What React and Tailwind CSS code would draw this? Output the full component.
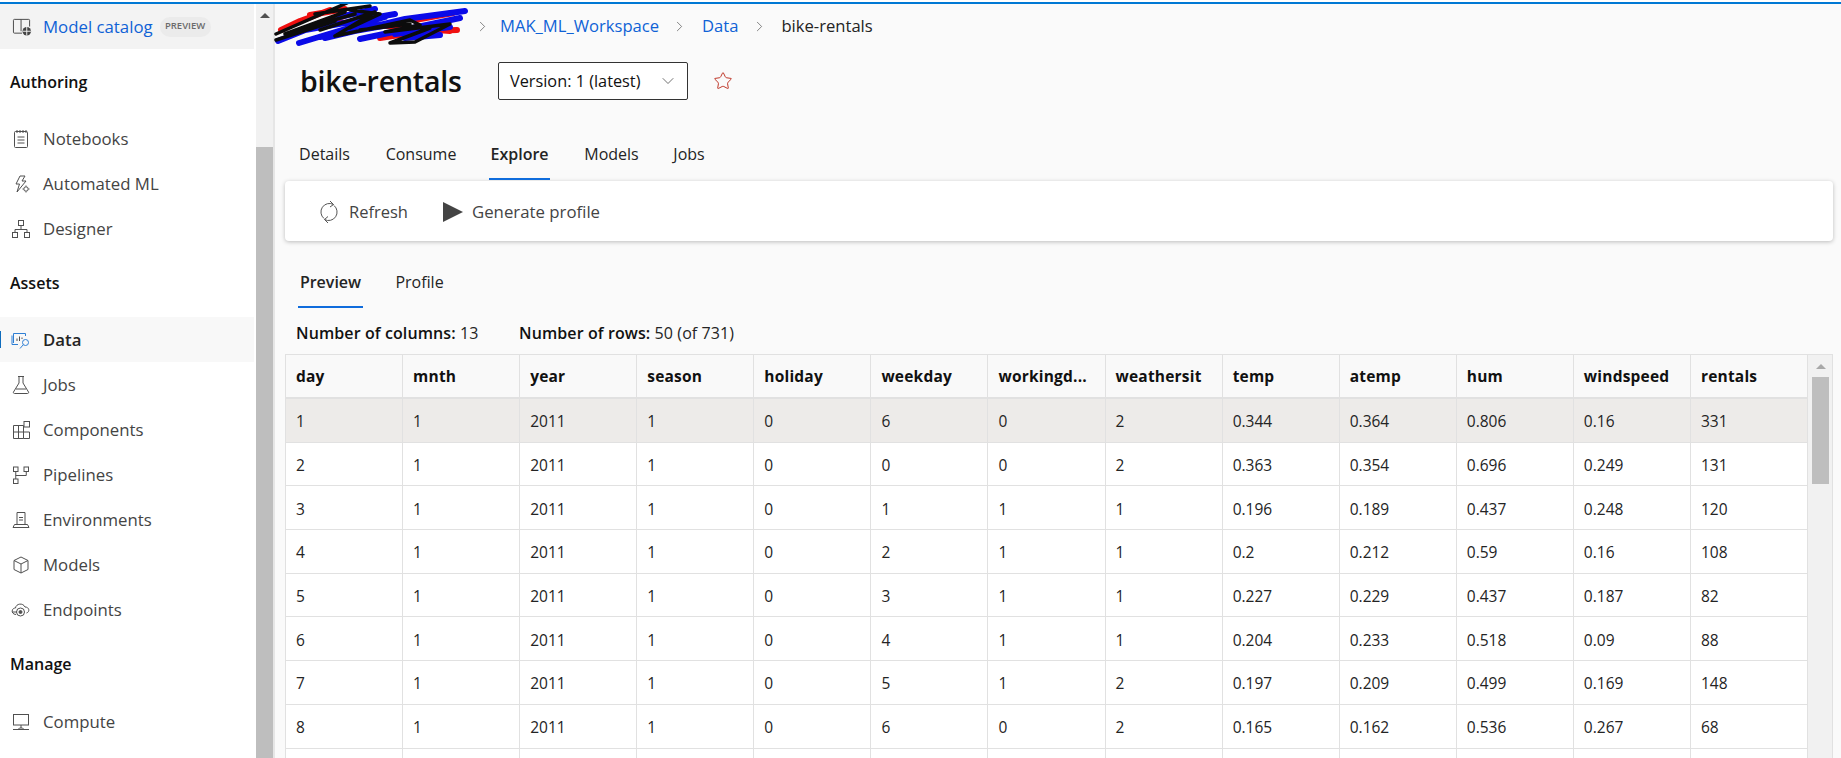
import { ChevronRight, ChevronDown, Star } from 'lucide-react'

const FONT = "font-['Open_Sans','Noto_Sans',sans-serif]"

const Icon = ({ children, className = 'text-[#505050]' }) => (
  <svg viewBox="0 0 20 20" width="20" height="20" fill="none" stroke="currentColor" strokeWidth="1" className={className}>
    {children}
  </svg>
)

const icons = {
  notebooks: (
    <>
      <rect x="3.5" y="2.5" width="13" height="16" rx="1" />
      <path d="M6 1v3M9 1v3M12 1v3M15 1v3M6.5 8h7M6.5 11h7M6.5 14h7" />
    </>
  ),
  automl: (
    <>
      <path d="M9 2h5l-3 5h4l-9 11 2.5-8H5z" />
      <circle cx="15" cy="15" r="2.2" fill="#fff" />
      <path d="M15 11.5v1M15 17.5v1M11.5 15h1M17.5 15h1" />
    </>
  ),
  designer: (
    <>
      <rect x="7.5" y="1.5" width="5" height="5" />
      <rect x="1.5" y="13.5" width="5" height="5" />
      <rect x="13.5" y="13.5" width="5" height="5" />
      <path d="M10 6.5v4M4 13.5v-3h12v3" />
    </>
  ),
  data: (
    <>
      <path d="M2.5 13V3.5h12V6" stroke="#2f7fd4" />
      <path d="M1 5.5v9h6" stroke="#2f7fd4" />
      <path d="M6 11V8.5M8.5 11V6.5M11 9V7.5" stroke="#505050" />
      <circle cx="14.5" cy="12.5" r="3" stroke="#2f7fd4" />
      <path d="M12.3 14.7 9 18.5" stroke="#2f7fd4" />
    </>
  ),
  jobs: <path d="M7 1.5h6M8 2v6L2.5 17a1 1 0 0 0 1 1.5h13a1 1 0 0 0 1-1.5L12 8V2M5 14h10" />,
  components: (
    <>
      <path d="M2.5 5.5h10v13h-10zM2.5 12h10M7.5 5.5v13M12.5 12h6v6.5h-6" />
      <rect x="13" y="1.5" width="5.5" height="5.5" />
    </>
  ),
  pipelines: (
    <>
      <rect x="2.5" y="2" width="4.5" height="4.5" />
      <rect x="13" y="2" width="4.5" height="4.5" />
      <rect x="2.5" y="14" width="4.5" height="4.5" />
      <path d="M4.75 6.5V14M4.75 10.5h10.5V6.5" />
    </>
  ),
  environments: <path d="M6 14.5V2.5h8v12M2 17.5l1.5-3h13l1.5 3zM8 7.5h4M8 10h4" />,
  models: <path d="M10 2l7 3.5v9L10 18l-7-3.5v-9zM3 5.5l7 3.5 7-3.500M10 9v9" />,
  endpoints: (
    <>
      <path d="M5 14.500c-5 0-5-6.500-.5-6.500C5 3.500 12 2.500 14 7c4.500 0 5 5 1.500 6" />
      <circle cx="9.500" cy="12" r="4" />
      <circle cx="9.500" cy="12" r="1.500" fill="currentColor" />
      <path d="M1 12h5" />
    </>
  ),
  compute: (
    <>
      <rect x="2.500" y="2.500" width="15" height="10.500" />
      <path d="M10 13v3M2 17.500h16M7 17.500l1.500-1.500h3l1.500 1.500" />
    </>
  ),
}

const NavItem = ({ icon, label, active }) => (
  <div className={`relative flex h-[45px] items-center ${active ? 'bg-[#f8f8f8]' : ''}`}>
    {active && <div className="absolute left-0 top-[14px] h-[17px] w-[1px] bg-[#0f6cbd]" />}
    <div className="ml-[11px] w-[32px]">
      <Icon>{icons[icon]}</Icon>
    </div>
    <span className={`text-[16.800px] ${active ? 'font-semibold text-[#242424]' : 'text-[#444]'}`}>{label}</span>
  </div>
)

const SectionTitle = ({ label, className }) => (
  <div className={`pl-[10px] text-[16px] font-semibold text-[#111] ${className}`}>{label}</div>
)

function Sidebar() {
  return (
    <div className="flex h-full w-[275px] shrink-0 border-r-2 border-[#e6e6e6] bg-white">
      <div className="w-[254px] shrink-0">
        <div className="flex h-[45px] items-center bg-[#f3f3f3] pl-[11px]">
          <svg viewBox="0 0 22 20" width="22" height="19" fill="none" stroke="#444" strokeWidth="1">
            <path d="M10 2.500H3a1 1 0 0 0-1 1V16a1 1 0 0 0 1 1h8M10 2.500V15M10 2.500h8a1 1 0 0 1 1 1V10" />
            <circle cx="16" cy="15" r="4.500" fill="#444" stroke="none" />
            <path d="M11.500 15h9M16 10.500v9" stroke="#f3f3f3" />
          </svg>
          <span className="ml-[10px] text-[16.800px] text-[#0f62d6]">Model catalog</span>
          <span className="ml-[7px] flex h-[20px] w-[51px] items-center justify-center rounded-full bg-[#ebebeb] text-[9.500px] font-semibold text-[#6a6a6a]">
            PREVIEW
          </span>
        </div>
        <SectionTitle label="Authoring" className="mt-[21px]" />
        <div className="mt-[22px]">
          <NavItem icon="notebooks" label="Notebooks" />
          <NavItem icon="automl" label="Automated ML" />
          <NavItem icon="designer" label="Designer" />
        </div>
        <SectionTitle label="Assets" className="mt-[20px]" />
        <div className="mt-[22px]">
          <NavItem icon="data" label="Data" active />
          <NavItem icon="jobs" label="Jobs" />
          <NavItem icon="components" label="Components" />
          <NavItem icon="pipelines" label="Pipelines" />
          <NavItem icon="environments" label="Environments" />
          <NavItem icon="models" label="Models" />
          <NavItem icon="endpoints" label="Endpoints" />
        </div>
        <SectionTitle label="Manage" className="mt-[20px]" />
        <div className="mt-[23px]">
          <NavItem icon="compute" label="Compute" />
        </div>
      </div>
      <div className="ml-[2px] flex w-[17px] flex-col bg-[#f1f1f1]">
        <div className="flex h-[143px] justify-center pt-[9px]">
          <div className="h-0 w-0 border-x-[5px] border-b-[5px] border-x-transparent border-b-[#505050]" />
        </div>
        <div className="flex-1 bg-[#bebebe]" />
      </div>
    </div>
  )
}

const Scribble = () => (
  <svg viewBox="0 4 195 44" width="195" height="44" fill="none" strokeLinecap="round" strokeLinejoin="round" className="shrink-0 overflow-visible">
    <path d="M6 30 25 21 55 10M35 15 70 9M105 38 150 31 182 30M140 20 178 13M60 22 175 31" stroke="#f01010" strokeWidth="6" />
    <path d="M3 41 60 18 100 9M24 43 110 17M50 38 130 19 190 11M85 39 185 18M120 34 175 27M45 37 125 23M165 35 130 38M30 30 120 14" stroke="#0a0ae8" strokeWidth="6" />
    <path d="M1 34 72 3M1 40 60 21M40 14 95 6M45 30 100 12 60 36 135 20 145 25 110 32 175 24 140 42 115 43 155 28M75 10 105 14 75 28M30 28 80 14M10 34 70 12M85 30 135 24" stroke="#0c0c0c" strokeWidth="3.500" />
  </svg>
)

const Tab = ({ label, active, className }) => (
  <div className={`flex h-full flex-col items-center ${className}`}>
    <span className={`flex-1 whitespace-nowrap pt-[6px] text-[16px] text-[#242424] ${active ? 'font-semibold' : ''}`}>{label}</span>
    <div className={`h-[2px] w-full ${active ? 'bg-[#0f6cdc]' : ''}`} />
  </div>
)

const columns = ['day', 'mnth', 'year', 'season', 'holiday', 'weekday', 'workingd...', 'weathersit', 'temp', 'atemp', 'hum', 'windspeed', 'rentals']

const rows = [
  [1, 1, 2011, 1, 0, 6, 0, 2, '0.344', '0.364', '0.806', '0.16', 331],
  [2, 1, 2011, 1, 0, 0, 0, 2, '0.363', '0.354', '0.696', '0.249', 131],
  [3, 1, 2011, 1, 0, 1, 1, 1, '0.196', '0.189', '0.437', '0.248', 120],
  [4, 1, 2011, 1, 0, 2, 1, 1, '0.2', '0.212', '0.59', '0.16', 108],
  [5, 1, 2011, 1, 0, 3, 1, 1, '0.227', '0.229', '0.437', '0.187', 82],
  [6, 1, 2011, 1, 0, 4, 1, 1, '0.204', '0.233', '0.518', '0.09', 88],
  [7, 1, 2011, 1, 0, 5, 1, 2, '0.197', '0.209', '0.499', '0.169', 148],
  [8, 1, 2011, 1, 0, 6, 0, 2, '0.165', '0.162', '0.536', '0.267', 68],
]

function DataTable() {
  return (
    <div className="ml-[10px] mr-[8px] flex border border-b-0 border-[#e1e1e1] bg-white">
      <div className="min-w-0 flex-1">
        <div className="flex h-[44px] border-b-2 border-[#e1e1e1] bg-[#f9f9f9]">
          {columns.map((c) => (
            <div key={c} className="flex flex-1 items-center border-r border-[#e1e1e1] pl-[10px] pt-[2px] text-[15.500px] font-bold tracking-[0.2px] text-[#111]">
              {c}
            </div>
          ))}
        </div>
        {rows.map((r, i) => (
          <div key={r[0]} className={`flex h-[43.700px] border-b border-[#e1e1e1] ${i === 0 ? 'bg-[#edebe9]' : ''}`}>
            {r.map((v, j) => (
              <div key={j} className="flex flex-1 items-center border-r border-[#e1e1e1] pl-[10px] pt-[3px] text-[15.500px] text-[#242424]">
                {v}
              </div>
            ))}
          </div>
        ))}
        <div className="flex h-[10px]">
          {columns.map((c) => (
            <div key={c} className="flex-1 border-r border-[#e1e1e1]" />
          ))}
        </div>
      </div>
      <div className="flex w-[24px] shrink-0 flex-col items-center bg-[#f1f1f1] pl-[4px] pr-[3px]">
        <div className="flex h-[22px] w-full justify-center pt-[9px]">
          <div className="h-0 w-0 border-x-[5px] border-b-[5px] border-x-transparent border-b-[#a8a8a8]" />
        </div>
        <div className="h-[107px] w-full bg-[#bebebe]" />
      </div>
    </div>
  )
}

function Main() {
  return (
    <div className="min-w-0 flex-1 bg-[#fafafa]">
      <div className="flex h-[44px] items-center">
        <Scribble />
        <ChevronRight size={17} strokeWidth={1} className="ml-[4px] text-[#555]" />
        <span className="ml-[9px] text-[16.600px] text-[#0f62d6]">MAK_ML_Workspace</span>
        <ChevronRight size={17} strokeWidth={1} className="ml-[12px] text-[#555]" />
        <span className="ml-[14px] text-[16.600px] text-[#0f62d6]">Data</span>
        <ChevronRight size={17} strokeWidth={1} className="ml-[13px] text-[#555]" />
        <span className="ml-[13px] text-[16.600px] text-[#242424]">bike-rentals</span>
      </div>
      <div className="mt-[14px] flex h-[38px] items-center pl-[25px]">
        <h1 className="w-[198px] text-[28.500px] font-semibold tracking-[-0.2px] text-[#111]">bike-rentals</h1>
        <div className="flex h-full w-[190px] items-center justify-between rounded-[2px] border border-[#333] bg-white pl-[11px] pr-[9px]">
          <span className="text-[16.300px] text-[#111]">Version: 1 (latest)</span>
          <ChevronDown size={20} strokeWidth={1} className="text-[#555]" />
        </div>
        <Star size={20} strokeWidth={1.2} className="ml-[25px] text-[#c0392b]" />
      </div>
      <div className="ml-[24px] mt-[36px] flex h-[44px]">
        <Tab label="Details" className="w-[51px]" />
        <Tab label="Consume" className="ml-[35px] w-[72px]" />
        <Tab label="Explore" active className="ml-[32px] w-[61px]" />
        <Tab label="Models" className="ml-[33px] w-[57px]" />
        <Tab label="Jobs" className="ml-[32px] w-[34px]" />
      </div>
      <div className="ml-[10px] mr-[8px] mt-[1px] flex h-[60px] items-center rounded-[4px] bg-white pl-[34px] pt-[2px] shadow-[0_1px_4px_rgba(0,0,0,0.25)]">
        <svg viewBox="0 0 20 24" width="20" height="24" fill="none" stroke="#555" strokeWidth="1">
          <path d="M14.500 4.500A8.500 8.500 0 0 0 5 18.500M5.500 19.500A8.500 8.500 0 0 0 15 5.500M11 1l3.500 3.500L11 7M9 23l-3.500-3.500L9 16.500" />
        </svg>
        <span className="ml-[10px] text-[16.500px] font-medium text-[#444]">Refresh</span>
        <svg viewBox="0 0 20 20" width="20" height="20" className="ml-[35px]">
          <path d="M0 0 20 10 0 20z" fill="#444" />
        </svg>
        <span className="ml-[9px] text-[16.800px] font-medium text-[#444]">Generate profile</span>
      </div>
      <div className="ml-[23px] mt-[23px] flex h-[44px]">
        <Tab label="Preview" active className="w-[65px]" />
        <Tab label="Profile" className="ml-[32px] w-[49px]" />
      </div>
      <div className="ml-[21px] mt-[14px] flex h-[22px] items-center text-[16px] tracking-[0.1px] text-[#242424]">
        <span className="w-[223px]">
          <span className="font-semibold text-[#111]">Number of columns:</span> 13
        </span>
        <span>
          <span className="font-semibold text-[#111]">Number of rows:</span> 50 (of 731)
        </span>
      </div>
      <div className="mt-[10px]">
        <DataTable />
      </div>
    </div>
  )
}

export default function App() {
  return (
    <div className={`h-[758px] overflow-hidden bg-white ${FONT}`}>
      <div className="mt-[2px] h-[2px] bg-[#0078d4]" />
      <div className="flex h-[754px] overflow-hidden">
        <Sidebar />
        <Main />
      </div>
    </div>
  )
}
